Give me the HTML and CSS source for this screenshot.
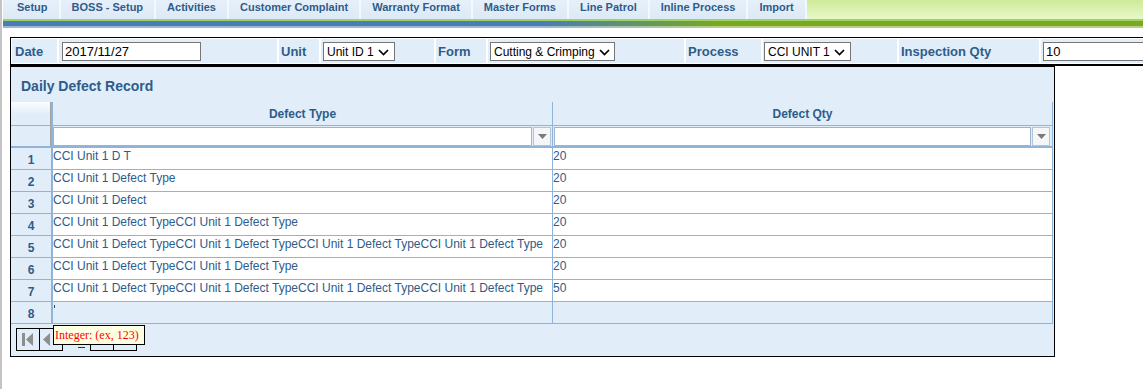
FILE: index.html
```html
<!DOCTYPE html>
<html>
  <head>
    <title>Daily Defect Record</title>

    <link rel="stylesheet" href="styles.css">
  </head>
  <body>
    <div class="menu">
      <a class="tab" href="#">Setup</a>
      <a class="tab" href="#">BOSS - Setup</a>
      <a class="tab" href="#">Activities</a>
      <a class="tab" href="#">Customer Complaint</a>
      <a class="tab" href="#">Warranty Format</a>
      <a class="tab" href="#">Master Forms</a>
      <a class="tab" href="#">Line Patrol</a>
      <a class="tab" href="#">Inline Process</a>
      <a class="tab" href="#">Import</a>
    </div>
    <div class="band"></div>

    <div class="page">
      <table class="head-form">
        <tr>
          <td class="lbl c-date">Date</td>
          <td class="fld c-datefld"><input type="text" class="txt date" value="2017/11/27" /></td>
          <td class="lbl c-unit">Unit</td>
          <td class="fld c-unitfld">
            <span class="sel unit">
              <span class="sel-text">Unit ID 1</span>
              <svg width="11" height="7" viewBox="0 0 11 7"><polyline points="1,1 5.5,5.5 10,1" fill="none" stroke="#000" stroke-width="1.7" /></svg>
            </span>
          </td>
          <td class="lbl c-form">Form</td>
          <td class="fld c-formfld">
            <span class="sel form">
              <span class="sel-text">Cutting &amp; Crimping</span>
              <svg width="11" height="7" viewBox="0 0 11 7"><polyline points="1,1 5.5,5.5 10,1" fill="none" stroke="#000" stroke-width="1.7" /></svg>
            </span>
          </td>
          <td class="lbl c-proc">Process</td>
          <td class="fld c-procfld">
            <span class="sel proc">
              <span class="sel-text">CCI UNIT 1</span>
              <svg width="11" height="7" viewBox="0 0 11 7"><polyline points="1,1 5.5,5.5 10,1" fill="none" stroke="#000" stroke-width="1.7" /></svg>
            </span>
          </td>
          <td class="lbl c-qty">Inspection Qty</td>
          <td class="fld c-qtyfld"><input type="text" class="txt qty" value="10" /></td>
        </tr>
      </table>

      <div class="grid">
        <div class="grid-title">Daily Defect Record</div>
        <table class="rows">
          <thead>
            <tr class="head">
              <th class="num"></th>
              <th class="col-type">Defect Type</th>
              <th class="col-qty">Defect Qty</th>
            </tr>
            <tr class="filter">
              <th class="num"></th>
              <td class="flt-cell">
                <div class="flt">
                  <input type="text" />
                  <span class="dd">
                    <svg width="9" height="5" viewBox="0 0 9 5"><polygon points="0,0 9,0 4.5,5" fill="#7a7a7a" /></svg>
                  </span>
                </div>
              </td>
              <td class="flt-cell">
                <div class="flt">
                  <input type="text" />
                  <span class="dd">
                    <svg width="9" height="5" viewBox="0 0 9 5"><polygon points="0,0 9,0 4.5,5" fill="#7a7a7a" /></svg>
                  </span>
                </div>
              </td>
            </tr>
          </thead>
          <tbody>
            <tr>
              <td class="num">1</td>
              <td>CCI Unit 1 D T</td>
              <td>20</td>
            </tr>
            <tr>
              <td class="num">2</td>
              <td>CCI Unit 1 Defect Type</td>
              <td>20</td>
            </tr>
            <tr>
              <td class="num">3</td>
              <td>CCI Unit 1 Defect</td>
              <td>20</td>
            </tr>
            <tr>
              <td class="num">4</td>
              <td>CCI Unit 1 Defect TypeCCI Unit 1 Defect Type</td>
              <td>20</td>
            </tr>
            <tr>
              <td class="num">5</td>
              <td>CCI Unit 1 Defect TypeCCI Unit 1 Defect TypeCCI Unit 1 Defect TypeCCI Unit 1 Defect Type</td>
              <td>20</td>
            </tr>
            <tr>
              <td class="num">6</td>
              <td>CCI Unit 1 Defect TypeCCI Unit 1 Defect Type</td>
              <td>20</td>
            </tr>
            <tr>
              <td class="num">7</td>
              <td>CCI Unit 1 Defect TypeCCI Unit 1 Defect TypeCCI Unit 1 Defect TypeCCI Unit 1 Defect Type</td>
              <td>50</td>
            </tr>
            <tr class="new-row">
              <td class="num">8</td>
              <td><span class="caret"></span></td>
              <td></td>
            </tr>
          </tbody>
        </table>

        <div class="pager">
          <span class="pg-btn">
            <svg width="22" height="21" viewBox="0 0 22 21"><rect x="5" y="4" width="3" height="13" fill="#8e8e8e" /><polygon points="16,4 9,10.5 16,17" fill="#8e8e8e" /></svg>
          </span>
          <span class="pg-btn">
            <svg width="22" height="21" viewBox="0 0 22 21"><polygon points="10,4 3,10.5 10,17" fill="#8e8e8e" /></svg>
          </span>
          <span class="pg-link"></span>
          <span class="pg-btn"></span>
          <span class="pg-btn"></span>

          <div class="tip">Integer: (ex, 123)</div>
        </div>
      </div>
    </div>
  </body>
</html>
```

FILE: styles.css
```css
html,
body {
  margin: 0;
  height: 100%;
}

body {
  font-family: "Liberation Sans", Arial, sans-serif;
  background-color: #fff;
  border-left: 2px solid #c4c4c4;
  padding-left: 1px;
  box-sizing: border-box;
  overflow: hidden;
}

/* top menu */
.menu {
  display: flex;
  height: 19px;
  background: linear-gradient(#cdea98, #e8f8c8);
  border-bottom: 2px solid #9bd364;
}

.tab {
  display: block;
  padding: 0 11px;
  line-height: 14px;
  font-size: 11px;
  font-weight: bold;
  color: #2e5c8a;
  text-decoration: none;
  white-space: nowrap;
  background: linear-gradient(#e6f0fa, #dde9f6);
  border-right: 2px solid #f3f8fc;
}

.tab:first-child {
  padding-left: 14px;
}

.band {
  height: 7px;
  background:
    linear-gradient(to bottom, transparent 5px, rgba(255, 255, 255, 0.45) 5px),
    linear-gradient(to right, #4a7db4 0, #4a7db4 540px, #7ba81f 720px, #7ba81f 100%);
}

.page {
  padding: 9px 0 0 7px;
}

/* header form */
.head-form {
  border-collapse: separate;
  border-spacing: 0;
  table-layout: fixed;
  width: 1232px;
  border-top: 1px solid #000;
  border-left: 1px solid #000;
  border-bottom: 2px solid #000;
}

.head-form td {
  box-sizing: border-box;
  height: 26px;
  padding: 0;
  border: 1px solid #fff;
  background-color: #e1eefa;
  vertical-align: middle;
  white-space: nowrap;
}

.head-form td.lbl {
  font-size: 13px;
  font-weight: bold;
  color: #2e5c8a;
  padding-left: 2px;
}

.head-form td.c-date {
  padding-left: 3px;
}

.c-date { width: 47px; }
.c-datefld { width: 220px; }
.c-unit { width: 42px; }
.c-unitfld { width: 115px; }
.c-form { width: 52px; }
.c-formfld { width: 198px; }
.c-proc { width: 77px; }
.c-procfld { width: 136px; }
.c-qty { width: 142px; }
.c-qtyfld { width: 202px; }

.txt {
  display: block;
  box-sizing: border-box;
  height: 19px;
  margin-left: 3px;
  padding: 0 2px;
  border: 1px solid #767676;
  font-family: "Liberation Sans", Arial, sans-serif;
  font-size: 13px;
  color: #000;
}

.txt.date {
  width: 139px;
}

.txt.qty {
  width: 190px;
  margin-left: 2px;
}

.sel {
  display: flex;
  align-items: center;
  gap: 4px;
  box-sizing: border-box;
  height: 19px;
  margin-left: 2px;
  padding: 0 3px 0 3px;
  border: 1px solid #767676;
  background-color: #fff;
  font-size: 12px;
  color: #000;
}

.sel-text {
  white-space: nowrap;
}

.sel svg {
  display: block;
  flex-shrink: 0;
  margin-top: 1px;
}

.sel.unit { width: 72px; }
.sel.form { width: 125px; }
.sel.proc { width: 87px; margin-left: 1px; }

/* grid */
.grid {
  position: relative;
  width: 1045px;
  box-sizing: border-box;
  border: 1px solid #000;
  background-color: #e1eefa;
}

.grid-title {
  height: 35px;
  box-sizing: border-box;
  padding: 11px 0 0 10px;
  line-height: 16px;
  font-size: 14px;
  font-weight: bold;
  color: #2e5c8a;
}

.rows {
  border-collapse: separate;
  border-spacing: 0;
  table-layout: fixed;
  width: 1042px;
  font-size: 12px;
  color: #2e5c8a;
}

.rows th,
.rows td {
  box-sizing: border-box;
  padding: 0;
  border-right: 1px solid #8fb4d8;
  border-bottom: 1px solid #8fb4d8;
  white-space: nowrap;
  overflow: hidden;
}

.rows .num {
  width: 42px;
  border-right-width: 2px;
  background-color: #e1eefa;
  text-align: center;
  font-weight: bold;
}

.rows .col-type,
.rows .col-qty {
  width: 500px;
}

.head th {
  height: 24px;
  text-align: center;
  vertical-align: middle;
  font-weight: bold;
  background-color: #e1eefa;
}

.head th.num {
  background: linear-gradient(#fbfdff 0, #e1eefa 12px);
  box-shadow: inset -1px 0 0 #a2a2a2;
}

.filter th,
.filter td {
  height: 22px;
  border-bottom-width: 2px;
  background-color: #e1eefa;
  vertical-align: top;
}

.filter th.num {
  box-shadow: inset -1px 0 0 #a2a2a2;
}

.flt {
  display: flex;
  gap: 1px;
  padding: 1px 1px 0 0;
}

.flt-cell:last-child .flt {
  padding-left: 1px;
  padding-right: 2px;
}

.flt input {
  flex: 1;
  min-width: 0;
  height: 19px;
  box-sizing: border-box;
  margin: 0;
  border: 1px solid #9ab5d0;
  background-color: #fff;
}

.dd {
  display: flex;
  align-items: center;
  justify-content: center;
  width: 18px;
  height: 19px;
  box-sizing: border-box;
  border: 1px solid #b4c4d4;
  background-color: #f4f6f8;
}

tbody td {
  height: 22px;
  line-height: 14px;
  padding-top: 1px !important;
  vertical-align: top;
  background-color: #fff;
}

tbody td.num {
  vertical-align: middle;
  padding-top: 3px !important;
}

.new-row td {
  background-color: #e1eefa;
}

.caret {
  display: inline-block;
  width: 1px;
  height: 3px;
  margin: 2px 0 0 1px;
  background-color: #444;
  vertical-align: top;
}

/* pager */
.pager {
  position: relative;
  display: flex;
  align-items: flex-start;
  height: 32px;
  padding: 4px 0 0 5px;
  box-sizing: border-box;
}

.pg-btn {
  display: block;
  width: 24px;
  height: 23px;
  box-sizing: border-box;
  border: 1px solid #000;
  margin-right: -1px;
}

.pg-btn svg {
  display: block;
}

.pg-link {
  display: block;
  width: 7px;
  height: 19px;
  margin: 0 5px 0 16px;
  border-bottom: 1px solid #800080;
}

.tip {
  position: absolute;
  left: 42px;
  top: 1px;
  height: 20px;
  box-sizing: border-box;
  padding: 0 5px 0 1px;
  border: 1px solid #000;
  background-color: #ffffe1;
  font-family: "Liberation Serif", "Times New Roman", serif;
  font-size: 12px;
  line-height: 18px;
  color: #f00;
  white-space: nowrap;
}
```
